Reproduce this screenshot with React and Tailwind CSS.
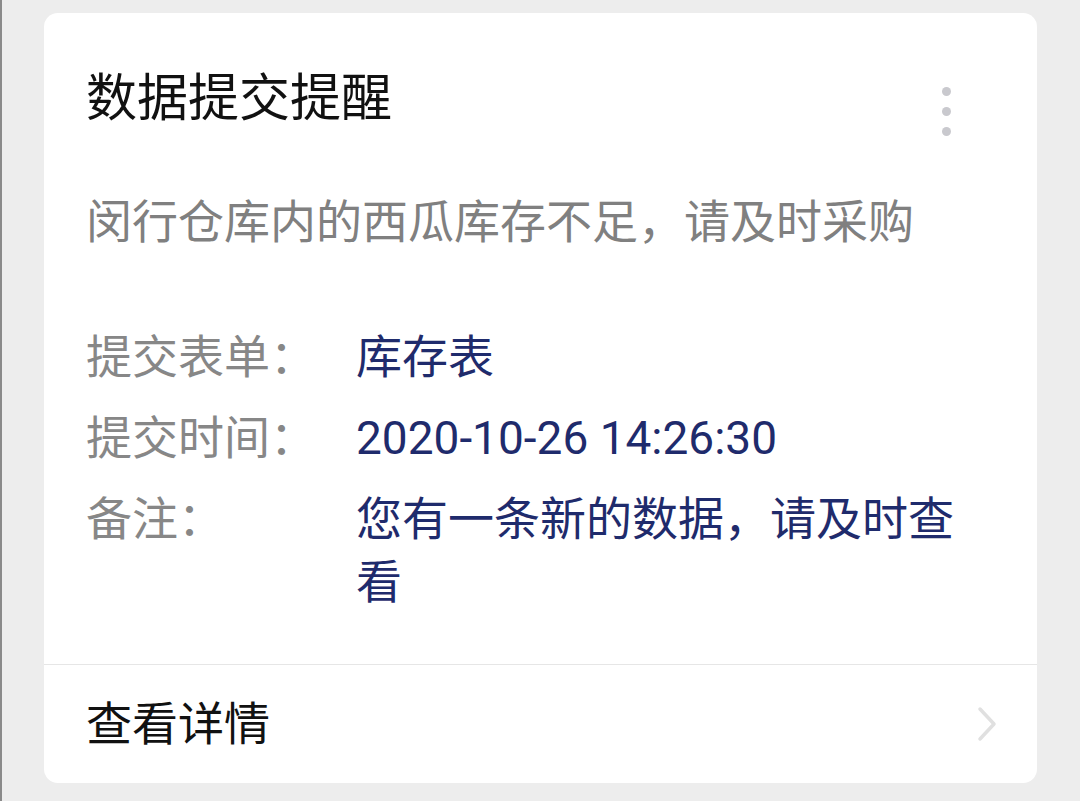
import React from "react";

const rows = [
  { label: "提交表单：", value: "库存表" },
  { label: "提交时间：", value: "2020-10-26 14:26:30" },
  { label: "备注：", value: "您有一条新的数据，请及时查看" },
];

export default function App() {
  return (
    <div
      className="min-h-screen w-full bg-[#ededed] border-l-2 border-[#8a8a8a] pt-[13px] pl-[42px]"
      style={{ fontFamily: '"Roboto", "Noto Sans CJK SC", sans-serif' }}
    >
      <div className="w-[993px] h-[770px] bg-white rounded-[14px] flex flex-col">
        <div className="flex-1 pl-[42px] pr-[86px] pt-[56px]">
          {/* Header */}
          <div className="flex justify-between">
            <h1 className="text-[51px] leading-[60px] text-[#111] font-normal">数据提交提醒</h1>
            <div className="flex flex-col gap-[11px] mt-[18px]">
              <span className="w-[9px] h-[9px] rounded-full bg-[#c9c9ce]" />
              <span className="w-[9px] h-[9px] rounded-full bg-[#c9c9ce]" />
              <span className="w-[9px] h-[9px] rounded-full bg-[#c9c9ce]" />
            </div>
          </div>

          {/* Description */}
          <p className="mt-[56px] text-[46px] leading-[60px] text-[#808080]">
            闵行仓库内的西瓜库存不足，请及时采购
          </p>

          {/* Details */}
          <div className="mt-[74px] flex flex-col gap-[18px]">
            {rows.map((row) => (
              <div key={row.label} className="flex text-[46px] leading-[63px]">
                <div className="w-[270px] shrink-0 text-[#878787]">{row.label}</div>
                <div className="w-[620px] shrink-0 text-[#1f2b6c]">{row.value}</div>
              </div>
            ))}
          </div>
        </div>

        {/* Footer */}
        <div className="h-[119px] border-t border-[#e6e6e6] flex items-center justify-between pl-[42px] pr-[40px]">
          <span className="text-[46px] text-[#111]">查看详情</span>
          <svg width="20" height="36" viewBox="0 0 20 36" fill="none">
            <path d="M3 3 L17 18 L3 33" stroke="#e0e0e0" strokeWidth="3.5" strokeLinecap="round" strokeLinejoin="round" />
          </svg>
        </div>
      </div>
    </div>
  );
}
